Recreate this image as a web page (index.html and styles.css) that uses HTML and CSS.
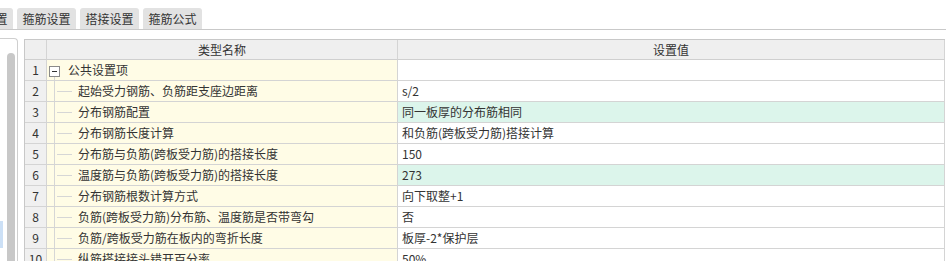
FILE: index.html
```html
<!DOCTYPE html>
<html lang="zh">
<head>
<meta charset="utf-8">
<title>钢筋设置</title>
<link rel="stylesheet" href="styles.css">
</head>
<body>
<div class="tabbar">
  <div class="tab tab-first">钢筋设置</div>
  <div class="tab">箍筋设置</div>
  <div class="tab">搭接设置</div>
  <div class="tab">箍筋公式</div>
</div>
<div class="main">
  <div class="side">
    <div class="side-sel"></div>
    <div class="side-scroll"></div>
  </div>
  <div class="grid">
    <div class="row head">
      <div class="cell num"></div>
      <div class="cell name center">类型名称</div>
      <div class="cell val center">设置值</div>
    </div>
    <div class="row">
      <div class="cell num">1</div>
      <div class="cell name"><svg class="tree" width="31" height="20" viewBox="0 0 31 20"><rect x="2.5" y="6.5" width="10" height="10" fill="#fff" stroke="#8a8a8a"/><line x1="5" y1="11.5" x2="10" y2="11.5" stroke="#333"/><line x1="7.5" y1="17" x2="7.5" y2="20" stroke="#d6d6d6"/></svg><span class="label parent">公共设置项</span></div>
      <div class="cell val"></div>
    </div>
    <div class="row">
      <div class="cell num">2</div>
      <div class="cell name"><svg class="tree" width="31" height="20" viewBox="0 0 31 20"><line x1="7.5" y1="0" x2="7.5" y2="20" stroke="#d6d6d6"/><line x1="10" y1="10.5" x2="25" y2="10.5" stroke="#d6d6d6"/></svg><span class="label">起始受力钢筋、负筋距支座边距离</span></div>
      <div class="cell val">s/2</div>
    </div>
    <div class="row">
      <div class="cell num">3</div>
      <div class="cell name"><svg class="tree" width="31" height="20" viewBox="0 0 31 20"><line x1="7.5" y1="0" x2="7.5" y2="20" stroke="#d6d6d6"/><line x1="10" y1="10.5" x2="25" y2="10.5" stroke="#d6d6d6"/></svg><span class="label">分布钢筋配置</span></div>
      <div class="cell val green">同一板厚的分布筋相同</div>
    </div>
    <div class="row">
      <div class="cell num">4</div>
      <div class="cell name"><svg class="tree" width="31" height="20" viewBox="0 0 31 20"><line x1="7.5" y1="0" x2="7.5" y2="20" stroke="#d6d6d6"/><line x1="10" y1="10.5" x2="25" y2="10.5" stroke="#d6d6d6"/></svg><span class="label">分布钢筋长度计算</span></div>
      <div class="cell val">和负筋(跨板受力筋)搭接计算</div>
    </div>
    <div class="row">
      <div class="cell num">5</div>
      <div class="cell name"><svg class="tree" width="31" height="20" viewBox="0 0 31 20"><line x1="7.5" y1="0" x2="7.5" y2="20" stroke="#d6d6d6"/><line x1="10" y1="10.5" x2="25" y2="10.5" stroke="#d6d6d6"/></svg><span class="label">分布筋与负筋(跨板受力筋)的搭接长度</span></div>
      <div class="cell val">150</div>
    </div>
    <div class="row">
      <div class="cell num">6</div>
      <div class="cell name"><svg class="tree" width="31" height="20" viewBox="0 0 31 20"><line x1="7.5" y1="0" x2="7.5" y2="20" stroke="#d6d6d6"/><line x1="10" y1="10.5" x2="25" y2="10.5" stroke="#d6d6d6"/></svg><span class="label">温度筋与负筋(跨板受力筋)的搭接长度</span></div>
      <div class="cell val green">273</div>
    </div>
    <div class="row">
      <div class="cell num">7</div>
      <div class="cell name"><svg class="tree" width="31" height="20" viewBox="0 0 31 20"><line x1="7.5" y1="0" x2="7.5" y2="20" stroke="#d6d6d6"/><line x1="10" y1="10.5" x2="25" y2="10.5" stroke="#d6d6d6"/></svg><span class="label">分布钢筋根数计算方式</span></div>
      <div class="cell val">向下取整+1</div>
    </div>
    <div class="row">
      <div class="cell num">8</div>
      <div class="cell name"><svg class="tree" width="31" height="20" viewBox="0 0 31 20"><line x1="7.5" y1="0" x2="7.5" y2="20" stroke="#d6d6d6"/><line x1="10" y1="10.5" x2="25" y2="10.5" stroke="#d6d6d6"/></svg><span class="label">负筋(跨板受力筋)分布筋、温度筋是否带弯勾</span></div>
      <div class="cell val">否</div>
    </div>
    <div class="row">
      <div class="cell num">9</div>
      <div class="cell name"><svg class="tree" width="31" height="20" viewBox="0 0 31 20"><line x1="7.5" y1="0" x2="7.5" y2="20" stroke="#d6d6d6"/><line x1="10" y1="10.5" x2="25" y2="10.5" stroke="#d6d6d6"/></svg><span class="label">负筋/跨板受力筋在板内的弯折长度</span></div>
      <div class="cell val">板厚-2*保护层</div>
    </div>
    <div class="row">
      <div class="cell num">10</div>
      <div class="cell name"><svg class="tree" width="31" height="20" viewBox="0 0 31 20"><line x1="7.5" y1="0" x2="7.5" y2="20" stroke="#d6d6d6"/><line x1="10" y1="10.5" x2="25" y2="10.5" stroke="#d6d6d6"/></svg><span class="label">纵筋搭接接头错开百分率</span></div>
      <div class="cell val">50%</div>
    </div>
    <div class="row">
      <div class="cell num">11</div>
      <div class="cell name"><svg class="tree" width="31" height="20" viewBox="0 0 31 20"><line x1="7.5" y1="0" x2="7.5" y2="20" stroke="#d6d6d6"/><line x1="10" y1="10.5" x2="25" y2="10.5" stroke="#d6d6d6"/></svg><span class="label">温度筋起步距离</span></div>
      <div class="cell val">s</div>
    </div>
  </div>
</div>
</body>
</html>
```

FILE: styles.css
```css
html, body {
  margin: 0;
  padding: 0;
  background: #ffffff;
  overflow: hidden;
  height: 261px;
}

body {
  font-family: "Microsoft YaHei", "Noto Sans CJK SC", "Noto Sans", sans-serif;
  font-size: 12px;
  color: #333333;
}

.tabbar {
  display: flex;
  gap: 4px;
  padding-top: 8px;
  height: 21px;
  border-bottom: 1px solid #c9c9c9;
  overflow: hidden;
}

.tab {
  flex: 0 0 59px;
  height: 21px;
  line-height: 21px;
  text-align: center;
  background: #e2e2e2;
  border-radius: 3px 3px 0 0;
  color: #333333;
  white-space: nowrap;
}

.tab-first {
  margin-left: -46px;
}

.main {
  display: flex;
  align-items: flex-start;
}

.side {
  display: flex;
  align-items: flex-start;
  width: 17px;
  height: 240px;
  margin-top: 8px;
  border-top: 1px solid #cfcfcf;
  border-right: 1px solid #cfcfcf;
  border-top-right-radius: 4px;
  flex: 0 0 auto;
}

.side-sel {
  width: 3px;
  height: 27px;
  margin-top: 182px;
  background: #cce0f6;
}

.side-scroll {
  width: 8px;
  height: 220px;
  margin-left: 4px;
  margin-top: 14px;
  background: #c8c8c8;
  border-radius: 4px;
}

.grid {
  margin-top: 9px;
  margin-left: 6px;
  border-left: 1px solid #c8c8c8;
  border-top: 1px solid #c8c8c8;
  width: 920px;
  flex: 0 0 auto;
}

.row {
  display: grid;
  grid-template-columns: 22px 351px 547px;
  height: 21px;
}

.row.head {
  height: 20px;
}

.cell {
  box-sizing: border-box;
  border-right: 1px solid #d4d4d4;
  border-bottom: 1px solid #d4d4d4;
  line-height: 20px;
  white-space: nowrap;
  overflow: hidden;
}

.head .cell {
  background: #efefef;
  line-height: 19px;
  border-bottom-color: #cfcfcf;
}

.num {
  background: #f0f0f0;
  text-align: center;
}

.name {
  background: #fffce6;
  display: flex;
  align-items: flex-start;
}

.head .name {
  display: block;
}

.center {
  text-align: center;
}

.val {
  background: #ffffff;
  padding-left: 4px;
}

.val.center {
  padding-left: 0;
}

.val.green {
  background: #dcf5eb;
}

.tree {
  display: block;
  flex: 0 0 31px;
}

.label.parent {
  margin-left: -10px;
}
```
